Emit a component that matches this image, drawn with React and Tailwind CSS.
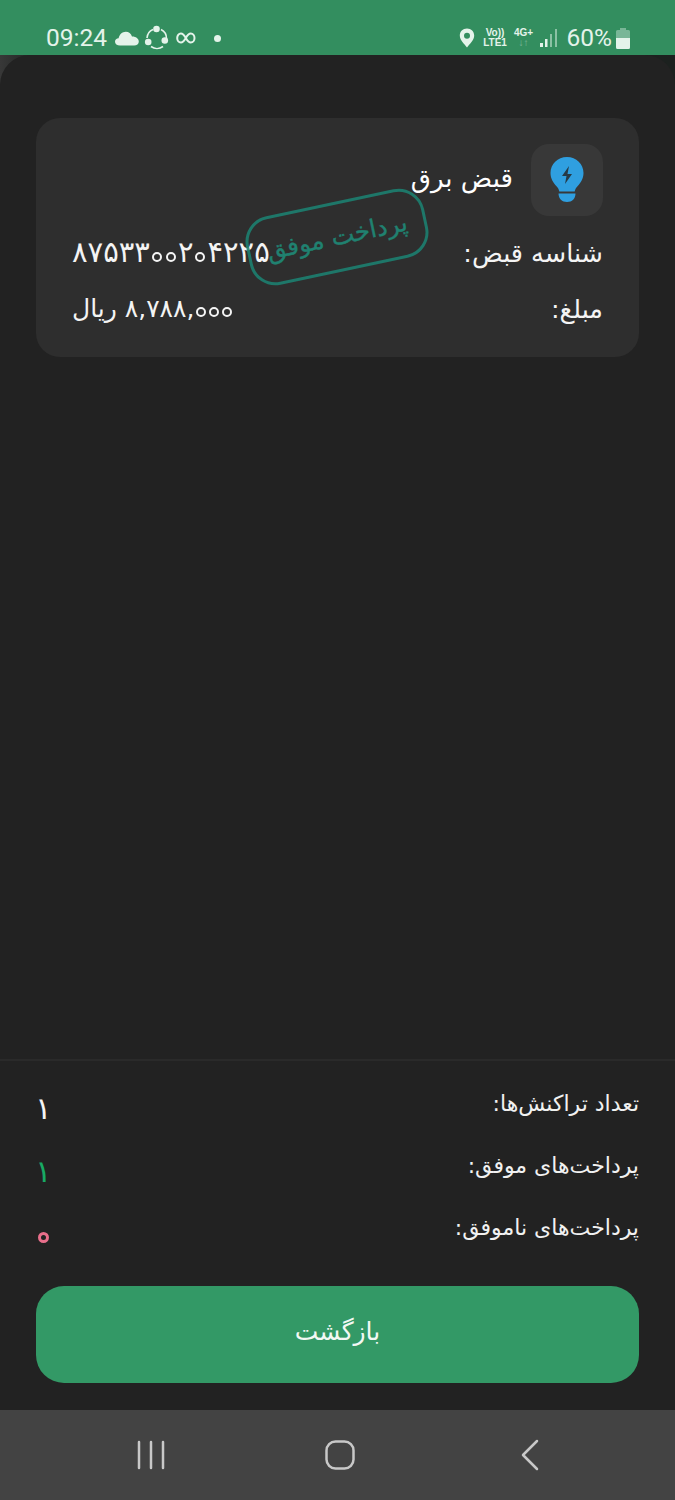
const FONT = "font-['DejaVu_Sans',sans-serif]"

const Zero = ({ className }) => (
  <span className={`inline-block align-baseline rounded-full border-current overflow-hidden ${className}`}>
    <span className="opacity-0 text-[1px]">۰</span>
  </span>
)

const StatusBar = () => (
  <div className="h-[55px] bg-[#338e5f] flex items-end justify-between pl-[46px] pr-[45px] pb-[2px] text-[#e4f3ea] font-['Roboto',sans-serif]">
    <div className="flex items-center h-[30px]">
      <span className="text-[24.500px] leading-[30px] w-[68px] whitespace-nowrap">09:24</span>
      <svg width="24" height="16" viewBox="0 0 24 16" className="ml-[1px]" fill="currentColor">
        <path d="M5 15.500C2 15.500 0 14 0 11.800 0 9.800 1.600 8.400 3.600 8.300 4.400 4.600 7.200 1.800 10.800 1.800c3 0 5.300 1.900 6.200 4.800 3.600-.2 6.800 2 6.800 5.200 0 2.200-2 3.700-4.600 3.700z" />
      </svg>
      <svg width="26" height="26" viewBox="0 0 26 26" className="ml-[5px]" fill="none" stroke="currentColor" strokeWidth="1.600">
        <path d="M17 4.500a10 10 0 0 1 5.500 9M19 21.500a10 10 0 0 1-12 0M3 13a10 10 0 0 1 6-8.500" />
        <circle cx="12.500" cy="4" r="3.300" fill="currentColor" stroke="none" />
        <circle cx="4.200" cy="17" r="3.300" fill="currentColor" stroke="none" />
        <circle cx="20.800" cy="15.500" r="3.300" fill="currentColor" stroke="none" />
      </svg>
      <svg width="20" height="12" viewBox="0 0 20 12" className="ml-[6px]" fill="none" stroke="currentColor" strokeWidth="2">
        <path d="M9.800 6C8 2.800 6.600 1.500 4.900 1.500 2.700 1.500 1.200 3.500 1.200 6s1.500 4.500 3.700 4.500c1.700 0 3.100-1.300 4.900-4.500 1.800-3.200 3.200-4.500 5-4.500 2.200 0 3.700 2 3.700 4.500s-1.500 4.500-3.700 4.500c-1.800 0-3.200-1.300-5-4.500z" />
      </svg>
      <span className="ml-[18px] size-[7px] rounded-full bg-[#e4f3ea]" />
    </div>
    <div className="flex items-center h-[30px]">
      <svg width="16" height="20" viewBox="0 0 16 20" fill="currentColor">
        <path fillRule="evenodd" d="M8 .500C3.800.500.800 3.600.800 7.600c0 4.700 4.700 8.700 7.200 11.900 2.500-3.200 7.200-7.200 7.200-11.900C15.200 3.600 12.200.500 8 .500zm0 4.300a3 3 0 1 1 0 6 3 3 0 0 1 0-6z" />
      </svg>
      <div className="ml-[7px] w-[27px] flex flex-col items-center font-['Liberation_Sans',sans-serif] font-bold text-[10px] leading-[10px]">
        <span>Vo))</span>
        <span>LTE1</span>
      </div>
      <div className="ml-[4px] w-[22px] flex flex-col items-center font-['Liberation_Sans',sans-serif] font-bold text-[10px] leading-[10px]">
        <span>4G+</span>
        <span className="opacity-40 text-[10px]">↓↑</span>
      </div>
      <svg width="18" height="20" viewBox="0 0 18 20" className="ml-[5px]">
        <rect x="0" y="15" width="3" height="4" fill="currentColor" />
        <rect x="5" y="11" width="2.500" height="8" fill="currentColor" />
        <rect x="10" y="6" width="2" height="13" fill="currentColor" opacity="0.5" />
        <rect x="15" y="1" width="2" height="18" fill="currentColor" opacity="0.5" />
      </svg>
      <span className="ml-[9px] text-[24.500px] leading-[30px] whitespace-nowrap">60%</span>
      <svg width="14" height="21" viewBox="0 0 14 21" className="ml-[4px]">
        <path d="M4 0h6v2h2.500A1.500 1.500 0 0 1 14 3.500V10H0V3.500A1.500 1.500 0 0 1 1.500 2H4z" fill="currentColor" opacity="0.4" />
        <path d="M0 10h14v9.500a1.500 1.500 0 0 1-1.500 1.500h-11A1.500 1.500 0 0 1 0 19.500z" fill="currentColor" />
      </svg>
    </div>
  </div>
)

const BillIcon = () => (
  <svg width="34" height="46" viewBox="0 0 34 46">
    <path d="M17 0C7.600 0 .500 7 .500 16c0 5.700 2.800 9.800 6 13.200 1.600 1.700 2.500 3.500 2.800 5.300h15.400c.3-1.800 1.200-3.600 2.800-5.300 3.200-3.400 6-7.500 6-13.200C33.500 7 26.400 0 17 0z" fill="#2f9fe0" />
    <path d="M19 9l-7 10h4.500L15 27l7-10h-4.500z" fill="#263a47" />
    <path d="M8.500 36.500h17c0 5-3.500 8.500-8.500 8.500s-8.500-3.500-8.500-8.500z" fill="#2f9fe0" />
  </svg>
)

const Stamp = () => (
  <div className="absolute left-[210px] top-[84px] w-[182px] h-[70px] -rotate-[12deg] border-[3px] border-[#1d7f70] rounded-[26px] flex items-center justify-center text-[#1f8a78] text-[24.500px] opacity-90 whitespace-nowrap [-webkit-text-stroke:0.4px_#1f8a78]">
    پرداخت موفق
  </div>
)

const Summary = ({ label, children, color }) => (
  <div className="flex justify-between items-start h-[62px]">
    <span className="text-[22px] leading-[34px] text-[#f1f1f1]">{label}</span>
    <span className={`h-[34px] flex items-center text-[31px] leading-[34px] ${color}`}>{children}</span>
  </div>
)

const App = () => {
  return (
    <div dir="rtl" className={`${FONT} w-[675px] h-[1500px] flex flex-col bg-linear-to-r from-[#383838] via-[#1c211f] via-[6%] to-[#1c211f] overflow-hidden`}>
      <div dir="ltr"><StatusBar /></div>
      <div className="flex-1 bg-[#222222] rounded-t-[30px] flex flex-col">
        <div className="flex-1 px-[36px] pt-[63px]">
          <div className="relative h-[239px] bg-[#2e2e2e] rounded-[24px] px-[36px] pt-[26px]">
            <div className="flex items-center gap-[18px]">
              <div className="size-[72px] rounded-[18px] bg-[#383838] flex items-center justify-center">
                <BillIcon />
              </div>
              <span className="text-[26px] leading-[34px] text-white pb-[4px]">قبض برق</span>
            </div>
            <div className="flex justify-between mt-[19px] h-[36px] items-center text-[#f4f4f4]">
              <span className="text-[25.500px]">شناسه قبض:</span>
              <span dir="ltr" className="text-[29px] whitespace-nowrap">
                ۸۷۵۳۳<Zero className="size-[10px] border-2 mx-[2px]" /><Zero className="size-[10px] border-2 mx-[2px]" />۲<Zero className="size-[10px] border-2 mx-[2px]" />۴۲۲۵
              </span>
            </div>
            <div className="flex justify-between mt-[20px] h-[36px] items-center text-[#f4f4f4]">
              <span className="text-[25.500px]">مبلغ:</span>
              <span className="text-[25px] whitespace-nowrap">
                <span dir="ltr" className="inline-block">
                  ۸,۷۸۸,<Zero className="size-[10px] border-2 mx-[1.500px]" /><Zero className="size-[10px] border-2 mx-[1.500px]" /><Zero className="size-[10px] border-2 mx-[1.500px]" />
                </span>{' '}ریال
              </span>
            </div>
            <Stamp />
          </div>
        </div>
        <div className="border-t-2 border-[#2a2a2a] px-[36px] pt-[26px] h-[351px]">
          <Summary label="تعداد تراکنش‌ها:" color="text-[#f4f4f4] pt-[8px] -ml-[1px]">۱</Summary>
          <Summary label="پرداخت‌های موفق:" color="text-[#18a964] pt-[9px] -ml-[1px]">۱</Summary>
          <Summary label="پرداخت‌های ناموفق:" color="text-[#e96f8b] pt-[18px] pl-[2px]">
            <Zero className="size-[11px] border-[3px]" />
          </Summary>
          <button className="mt-[13px] w-full h-[97px] rounded-[28px] bg-[#339966] text-[#f2f8f4] text-[25px] flex items-center justify-center pb-[5px]">
            بازگشت
          </button>
        </div>
      </div>
      <div dir="ltr" className="h-[90px] bg-[#434343] flex items-center pl-[137px] text-[#c8c8c8]">
        <svg width="28" height="30" viewBox="0 0 28 30" stroke="currentColor" strokeWidth="2.500" strokeLinecap="round">
          <path d="M2 2v26M14 2v26M26 2v26" />
        </svg>
        <svg width="30" height="30" viewBox="0 0 30 30" className="ml-[160px]" fill="none" stroke="currentColor" strokeWidth="2.500">
          <rect x="1.500" y="1.500" width="27" height="27" rx="9" />
        </svg>
        <svg width="20" height="32" viewBox="0 0 20 32" className="ml-[165px]" fill="none" stroke="currentColor" strokeWidth="2.500" strokeLinecap="round" strokeLinejoin="round">
          <path d="M17 2 3 16l14 14" />
        </svg>
      </div>
    </div>
  )
}

export default App
